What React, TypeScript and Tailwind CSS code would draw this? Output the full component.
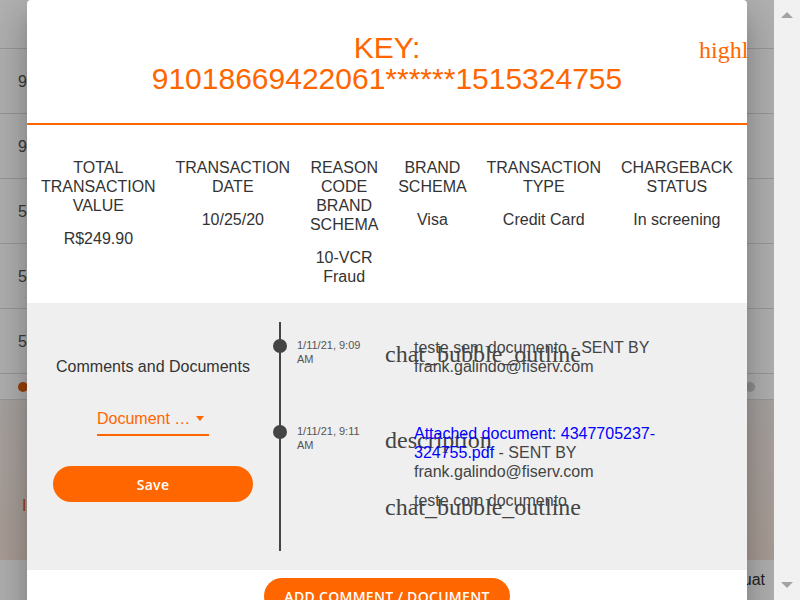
import React from 'react';

const summary = [
  { label: 'TOTAL TRANSACTION VALUE', value: 'R$249.90' },
  { label: 'TRANSACTION DATE', value: '10/25/20' },
  { label: 'REASON CODE BRAND SCHEMA', value: '10-VCR Fraud' },
  { label: 'BRAND SCHEMA', value: 'Visa' },
  { label: 'TRANSACTION TYPE', value: 'Credit Card' },
  { label: 'CHARGEBACK STATUS', value: 'In screening' },
];

const pageRows = ['91018669422061', '91018669422061', '5493811122334', '5493811122334', '5493811122334'];

const MessageIcon = ({ name }: { name: string }) => (
  <span className="w-[24px] shrink-0 mr-[5px] mt-[4px] whitespace-nowrap font-['Liberation_Serif',serif] text-[24px] leading-[24px] text-[#444]">
    {name}
  </span>
);

export default function App() {
  return (
    <div className="flex w-[800px] h-[600px] overflow-hidden font-['Liberation_Sans',Arial,sans-serif]">
      <div className="relative w-[774px] h-full overflow-hidden bg-white">
        {/* page behind the dialog */}
        <div className="h-[49px] border-b border-[#dcdcdc]" />
        {pageRows.map((row, i) => (
          <div key={i} className="h-[65px] border-b border-[#dcdcdc] flex items-center pl-[18px] pt-[1px] text-[16px] text-[#555]">
            {row}
          </div>
        ))}
        <div className="h-[26px] border-b border-[#dcdcdc] flex items-center justify-between pl-[18px] pr-[19px]">
          <div className="w-[10px] h-[10px] rounded-full bg-[#e0600a]" />
          <div className="w-[10px] h-[10px] rounded-full bg-[#cfcfcf]" />
        </div>
        <div className="h-[160px] bg-gradient-to-b from-[#f1ebe7] to-[#f5e3d9] pl-[22px] pt-[96px] text-[16px] leading-[19px] text-[#e0600a]">
          Informações adicionais
        </div>
        <div className="h-[40px] bg-white flex items-center justify-end pr-[9px] text-[16px] text-[#333]">
          Ambiente: uat
        </div>

        <div className="absolute inset-0 bg-black/30" />

        {/* dialog */}
        <div className="absolute top-0 left-[27px] w-[720px] bg-white rounded-t-[4px] overflow-hidden shadow-[0_11px_15px_-7px_rgba(0,0,0,0.2),0_24px_38px_3px_rgba(0,0,0,0.14),0_9px_46px_8px_rgba(0,0,0,0.12)]">
          <div className="relative pt-[32px] pb-[29px] border-b-2 border-[#ff6600] text-center text-[30px] leading-[31px] text-[#ff6600]">
            <p>KEY:</p>
            <p>91018669422061******1515324755</p>
            <span className="absolute top-[38px] left-[672px] w-[24px] whitespace-nowrap text-left font-['Liberation_Serif',serif] text-[24px] leading-[24px] text-[#ff6600]">
              highlight_off
            </span>
          </div>

          <div className="flex justify-between px-[14px] pt-[33px] pb-[17px] text-[16px] leading-[19px] text-[#333]">
            {summary.map((item) => (
              <div key={item.label} className="w-min text-center">
                <p>{item.label}</p>
                <p className="mt-[14px]">{item.value}</p>
              </div>
            ))}
          </div>

          <div className="flex h-[267px] bg-[#efefef]">
            <div className="w-[252px] shrink-0 flex flex-col items-center pt-[54px]">
              <p className="text-[16px] leading-[19px] text-[#333]">Comments and Documents</p>
              <div className="mt-[33px] w-[112px] pb-[6px] border-b-2 border-[#ff6600] flex items-center justify-between text-[16px] leading-[19px] text-[#ff6600]">
                <span>Document …</span>
                <span className="mr-[5px] border-x-[4.5px] border-x-transparent border-t-[5px] border-t-[#ff6600]" />
              </div>
              <button className="mt-[30px] w-[200px] h-[36px] rounded-full bg-[#ff6600] text-white text-[14px] tracking-[0.3px] font-semibold font-['Open_Sans',sans-serif]">
                Save
              </button>
            </div>

            <div className="my-[19px] border-l-2 border-[#444] pt-[16px] flex-1">
              <div className="relative flex items-start">
                <div className="absolute left-[-8px] top-[0.5px] w-[14px] h-[14px] rounded-full bg-[#444]" />
                <p className="ml-[16px] w-[88px] shrink-0 text-[11px] leading-[14px] text-[#555] pr-[22px]">1/11/21, 9:09 AM</p>
                <div className="flex items-start">
                  <MessageIcon name="chat_bubble_outline" />
                  <p className="w-[250px] text-[16px] leading-[19px] text-[#444]">
                    teste sem documento - SENT BY frank.galindo@fiserv.com
                  </p>
                </div>
              </div>

              <div className="relative flex items-start mt-[48px]">
                <div className="absolute left-[-8px] top-[0.5px] w-[14px] h-[14px] rounded-full bg-[#444]" />
                <p className="ml-[16px] w-[88px] shrink-0 text-[11px] leading-[14px] text-[#555] pr-[22px]">1/11/21, 9:11 AM</p>
                <div className="flex flex-col gap-[10px]">
                  <div className="flex items-start">
                    <MessageIcon name="description" />
                    <p className="w-[250px] text-[16px] leading-[19px] text-[#444]">
                      <a className="text-[#0000ff]">Attached document: 4347705237-324755.pdf</a> - SENT BY frank.galindo@fiserv.com
                    </p>
                  </div>
                  <div className="flex items-start">
                    <MessageIcon name="chat_bubble_outline" />
                    <p className="w-[250px] text-[16px] leading-[19px] text-[#444]">teste com documento</p>
                  </div>
                </div>
              </div>
            </div>
          </div>

          <div className="flex justify-center pt-[8px] pb-[20px]">
            <button className="w-[246px] h-[36px] rounded-full bg-[#ff6600] text-white text-[14px] tracking-[0.3px] font-semibold font-['Open_Sans',sans-serif]">
              ADD COMMENT / DOCUMENT
            </button>
          </div>
        </div>
      </div>

      {/* scrollbar */}
      <div className="w-[26px] h-full bg-[#f1f1f1] flex flex-col items-center justify-between py-[12px]">
        <div className="border-x-[6px] border-x-transparent border-b-[6px] border-b-[#a3a3a3]" />
        <div className="border-x-[6px] border-x-transparent border-t-[6px] border-t-[#a3a3a3]" />
      </div>
    </div>
  );
}
